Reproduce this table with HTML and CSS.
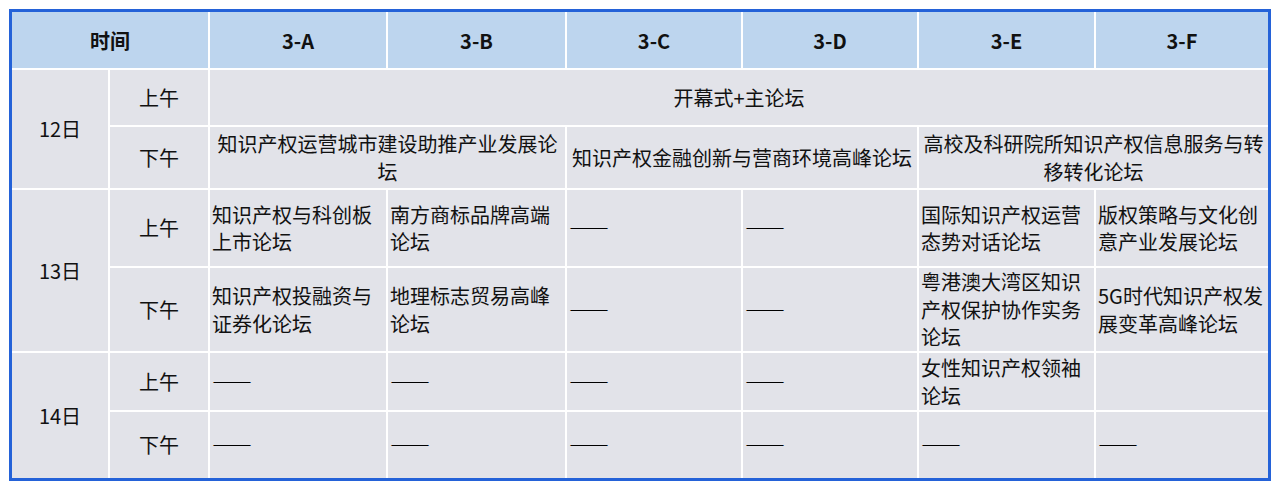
FILE: index.html
```html
<!DOCTYPE html>
<html lang="zh-CN">
<head>
<meta charset="utf-8">
<title>分会场日程</title>
<link rel="stylesheet" href="styles.css">
</head>
<body>
<div class="sheet">
  <div class="hd span-time">时间</div>
  <div class="hd">3-A</div>
  <div class="hd">3-B</div>
  <div class="hd">3-C</div>
  <div class="hd">3-D</div>
  <div class="hd">3-E</div>
  <div class="hd">3-F</div>

  <div class="c center day d12">12日</div>
  <div class="c center">上午</div>
  <div class="c center span6">开幕式+主论坛</div>

  <div class="c center">下午</div>
  <div class="c center span2">知识产权运营城市建设助推产业发展论坛</div>
  <div class="c center span2">知识产权金融创新与营商环境高峰论坛</div>
  <div class="c center span2">高校及科研院所知识产权信息服务与转移转化论坛</div>

  <div class="c center day d13">13日</div>
  <div class="c center">上午</div>
  <div class="c">知识产权与科创板上市论坛</div>
  <div class="c">南方商标品牌高端论坛</div>
  <div class="c dash">——</div>
  <div class="c dash">——</div>
  <div class="c">国际知识产权运营态势对话论坛</div>
  <div class="c">版权策略与文化创意产业发展论坛</div>

  <div class="c center">下午</div>
  <div class="c">知识产权投融资与证券化论坛</div>
  <div class="c">地理标志贸易高峰论坛</div>
  <div class="c dash">——</div>
  <div class="c dash">——</div>
  <div class="c">粤港澳大湾区知识产权保护协作实务论坛</div>
  <div class="c">5G时代知识产权发展变革高峰论坛</div>

  <div class="c center day d14">14日</div>
  <div class="c center">上午</div>
  <div class="c dash">——</div>
  <div class="c dash">——</div>
  <div class="c dash">——</div>
  <div class="c dash">——</div>
  <div class="c">女性知识产权领袖论坛</div>
  <div class="c"></div>

  <div class="c center">下午</div>
  <div class="c dash">——</div>
  <div class="c dash">——</div>
  <div class="c dash">——</div>
  <div class="c dash">——</div>
  <div class="c dash">——</div>
  <div class="c dash">——</div>
</div>
</body>
</html>
```
FILE: styles.css
```css
html, body {
  margin: 0;
  padding: 0;
  background: #ffffff;
}
body {
  padding: 9px;
  font-family: "Noto Sans CJK SC", "Noto Sans", sans-serif;
  color: #111;
}
.sheet {
  width: 1256px;
  border: 3px solid #2462d8;
  background: #ffffff;
  display: grid;
  grid-template-columns: 96px 98px 176px 177px 174px 174px 175px 172px;
  grid-template-rows: 56px 55px 61px 76px 83px 57px 66px;
  gap: 2px;
}
.hd {
  background: #bdd5ee;
  display: flex;
  align-items: center;
  justify-content: center;
  font-weight: 700;
  font-size: 20px;
  color: #111;
}
.span-time {
  grid-column: span 2;
}
.c {
  background: #e2e3e9;
  display: flex;
  align-items: center;
  padding: 0 2px;
  font-size: 20px;
  line-height: 27.5px;
  overflow: hidden;
}
.dash {
  font-feature-settings: "fwid" 1;
  font-weight: 500;
  color: #000;
}
.center {
  justify-content: center;
  text-align: center;
}
.span6 {
  grid-column: span 6;
}
.span2 {
  grid-column: span 2;
}
.day {
  grid-row: span 2;
}
```
